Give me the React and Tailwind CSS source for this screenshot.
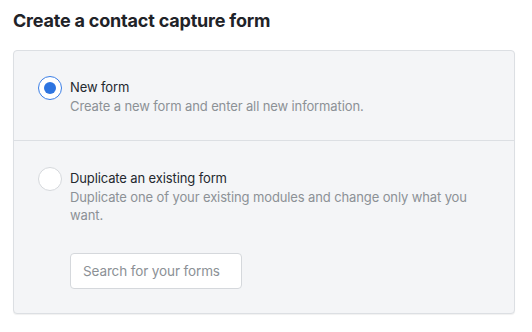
export default function App() {
  return (
    <div className="w-[532px] h-[332px] bg-white px-[13px] pt-[9px] font-['Inter',sans-serif] text-[#1f2328]">
      <h1 className="text-[18px] leading-[24px] font-bold tracking-[-0.2px]">
        Create a contact capture form
      </h1>
      <div className="mt-[17px] w-[502px] rounded-[4px] border border-[#dcdfe3] bg-[#f4f5f7] shadow-[0_1px_1px_rgba(0,0,0,0.06)]">
        <div className="flex gap-2 px-6 pt-[25px] pb-[25px] border-b border-[#dcdfe3]">
          <span className="w-6 h-6 shrink-0 rounded-full border border-[#3a7ee6] bg-white flex items-center justify-center">
            <span className="w-3 h-3 rounded-full bg-[#2d74e0]" />
          </span>
          <div className="pt-[2px] tracking-[-0.12px]">
            <div className="text-[13px] leading-[18px] text-[#24292f]">New form</div>
            <div className="mt-[1px] text-[13px] leading-[18px] text-[#8c9196]">
              Create a new form and enter all new information.
            </div>
          </div>
        </div>
        <div className="flex gap-2 px-6 pt-[26px] pb-[24px]">
          <span className="w-6 h-6 shrink-0 rounded-full border border-[#d5d8dc] bg-white" />
          <div className="pt-[2px] pr-[2px] tracking-[-0.12px]">
            <div className="text-[13px] leading-[18px] text-[#24292f]">Duplicate an existing form</div>
            <div className="mt-[1px] text-[13px] leading-[18px] text-[#8c9196]">
              Duplicate one of your existing modules and change only what you want.
            </div>
            <input
              type="text"
              placeholder="Search for your forms"
              className="mt-[29px] w-[172px] h-9 rounded-[4px] border border-[#d5d8dc] bg-white px-[12px] text-[13.5px] placeholder:text-[#8c9196] outline-none"
            />
          </div>
        </div>
      </div>
    </div>
  );
}
